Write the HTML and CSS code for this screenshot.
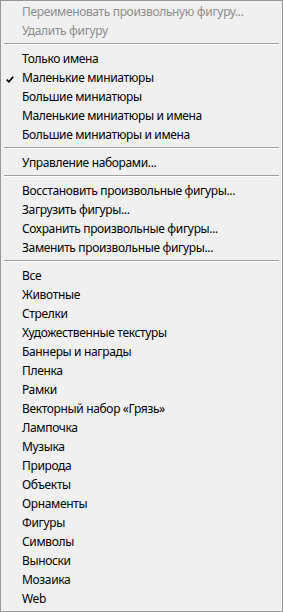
FILE: index.html
```html
<!DOCTYPE html>
<html lang="ru">

<head>
  <meta charset="UTF-8">
  <meta name="viewport" content="width=device-width, initial-scale=1.0">
  <title>Меню фигур</title>
  <link rel="stylesheet" href="styles.css">
</head>

<body>
  <div class="menu">
    <div class="menu-item disabled">Переименовать произвольную фигуру...</div>
    <div class="menu-item disabled">Удалить фигуру</div>

    <div class="separator"></div>

    <div class="menu-item">Только имена</div>
    <div class="menu-item checked">
      <svg class="check" width="8" height="7" viewBox="0 0 8 7">
        <path d="M0.8 3.6 L2.9 5.8 L7.2 0.8" fill="none" stroke="#000" stroke-width="1.7" />
      </svg>
      Маленькие миниатюры
    </div>
    <div class="menu-item">Большие миниатюры</div>
    <div class="menu-item">Маленькие миниатюры и имена</div>
    <div class="menu-item">Большие миниатюры и имена</div>

    <div class="separator"></div>

    <div class="menu-item">Управление наборами...</div>

    <div class="separator"></div>

    <div class="menu-item">Восстановить произвольные фигуры...</div>
    <div class="menu-item">Загрузить фигуры...</div>
    <div class="menu-item">Сохранить произвольные фигуры...</div>
    <div class="menu-item">Заменить произвольные фигуры...</div>

    <div class="separator"></div>

    <div class="menu-item">Все</div>
    <div class="menu-item">Животные</div>
    <div class="menu-item">Стрелки</div>
    <div class="menu-item">Художественные текстуры</div>
    <div class="menu-item">Баннеры и награды</div>
    <div class="menu-item">Пленка</div>
    <div class="menu-item">Рамки</div>
    <div class="menu-item">Векторный набор «Грязь»</div>
    <div class="menu-item">Лампочка</div>
    <div class="menu-item">Музыка</div>
    <div class="menu-item">Природа</div>
    <div class="menu-item">Объекты</div>
    <div class="menu-item">Орнаменты</div>
    <div class="menu-item">Фигуры</div>
    <div class="menu-item">Символы</div>
    <div class="menu-item">Выноски</div>
    <div class="menu-item">Мозаика</div>
    <div class="menu-item">Web</div>
  </div>
</body>

</html>
```

FILE: styles.css
```css
body {
  margin: 0;
  font-family: "Noto Sans", "Open Sans", sans-serif;
  font-size: 12px;
  color: #000;
  background-color: #f0f0f0;
}

.menu {
  width: 283px;
  height: 612px;
  box-sizing: border-box;
  padding: 2px 0;
  background-color: #f0f0f0;
  border: 1px solid #979797;
}

.menu-item {
  position: relative;
  height: 19px;
  line-height: 18px;
  padding-left: 21px;
  letter-spacing: -0.35px;
  white-space: nowrap;
}

.menu-item.disabled {
  color: #8d8d8d;
}

.check {
  position: absolute;
  left: 5px;
  top: 7px;
}

.separator {
  height: 9px;
  box-sizing: border-box;
  padding: 2px 3px 0 3px;
}

.separator::before {
  content: "";
  display: block;
  height: 1px;
  background-color: #a0a0a0;
  border-bottom: 1px solid #ffffff;
}
```
